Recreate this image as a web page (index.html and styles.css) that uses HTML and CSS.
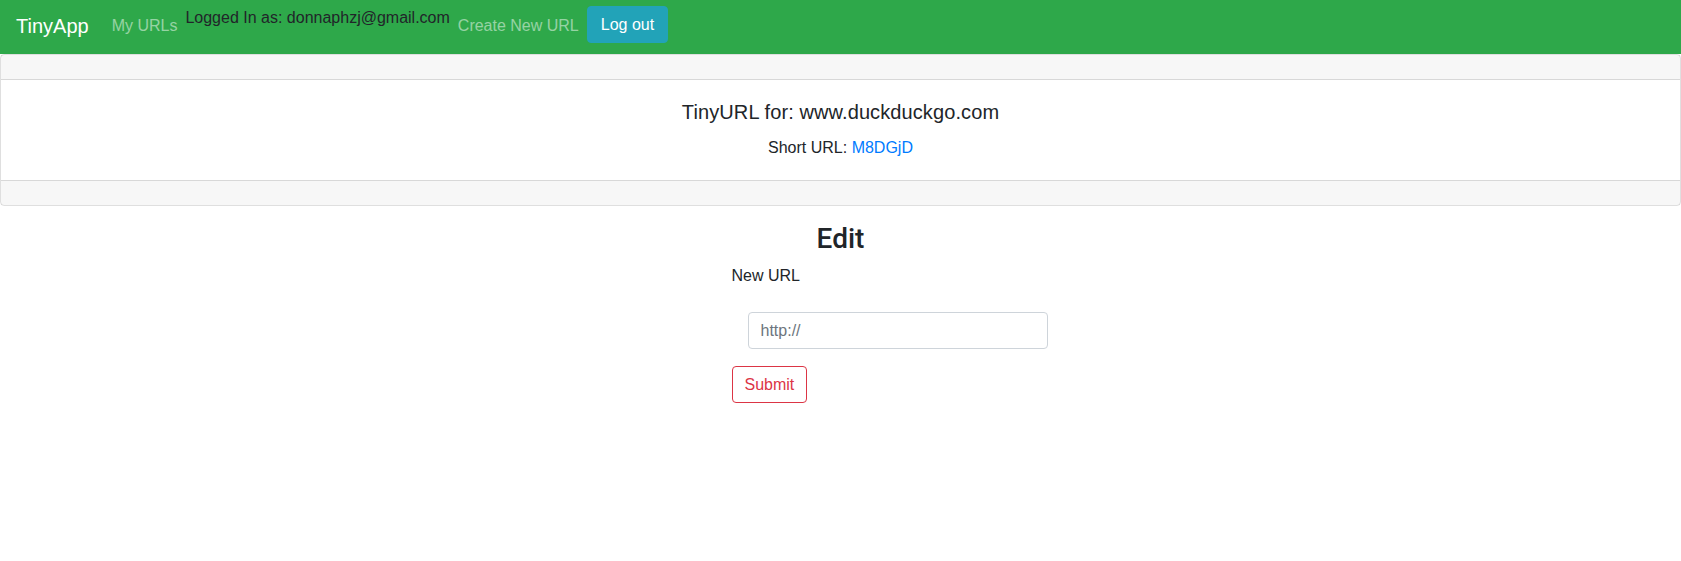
FILE: index.html
```html
<!DOCTYPE html>
<html lang="en">
<head>
<meta charset="utf-8">
<title>TinyApp</title>
<link rel="stylesheet" href="styles.css">
</head>
<body>
<nav class="navbar">
  <a class="brand" href="#">TinyApp</a>
  <a class="nav-link" href="#">My URLs</a>
  <div class="login">Logged In as: donnaphzj@gmail.com</div>
  <a class="nav-link" href="#">Create New URL</a>
  <button class="btn btn-info" type="button">Log out</button>
</nav>
<div class="card">
  <div class="card-header"></div>
  <div class="card-body">
    <h5 class="card-title">TinyURL for: www.duckduckgo.com</h5>
    <p class="card-text">Short URL: <a class="link" href="#">M8DGjD</a></p>
  </div>
  <div class="card-footer"></div>
</div>
<main class="edit">
  <h3 class="edit-title">Edit</h3>
  <form class="edit-form">
    <label class="form-label">New URL</label>
    <input class="form-control" type="text" placeholder="http://">
    <button class="btn btn-outline-danger" type="button">Submit</button>
  </form>
</main>
</body>
</html>
```
FILE: styles.css
```css
* { box-sizing: border-box; }
body {
  margin: 0;
  font-family: "Liberation Sans", Arial, sans-serif;
  font-size: 16px;
  line-height: 24px;
  color: #212529;
  background: #fff;
}
a { text-decoration: none; }
.navbar {
  display: flex;
  align-items: flex-start;
  background: #2ea84a;
  padding: 6px 16px 8px;
  height: 54px;
}
.brand {
  color: #fff;
  font-size: 20px;
  line-height: 30px;
  padding: 5px 0;
  margin-right: 15px;
}
.nav-link {
  color: rgba(255,255,255,.5);
  padding: 8px;
}
.login {
  color: #212529;
}
.btn {
  font-family: inherit;
  font-size: 16px;
  line-height: 24px;
  padding: 6px 12px;
  border: 1px solid transparent;
  border-radius: 4px;
  background: transparent;
  cursor: pointer;
}
.btn-info {
  background: #22a3b8;
  border-color: #22a3b8;
  color: #fff;
  height: 37px;
  padding: 5px 13px;
}
.card {
  border: 1px solid rgba(0,0,0,.125);
  border-radius: 4px;
  display: flex;
  flex-direction: column;
}
.card-header {
  height: 25px;
  background: rgba(0,0,0,.03);
  border-bottom: 1px solid rgba(0,0,0,.125);
}
.card-footer {
  height: 25px;
  background: rgba(0,0,0,.03);
  border-top: 1px solid rgba(0,0,0,.125);
}
.card-body {
  padding: 20px;
  text-align: center;
}
.card-title {
  margin: 0 0 12px;
  font-size: 20px;
  line-height: 24px;
  font-weight: 400;
  letter-spacing: 0.1px;
}
.card-text { margin: 0; }
.link { color: #007bff; }
.edit {
  display: flex;
  flex-direction: column;
}
.edit-title {
  margin: 16px 0 8px;
  text-align: center;
  font-family: Roboto, "Liberation Sans", sans-serif;
  font-size: 28px;
  line-height: 34px;
  font-weight: 500;
}
.edit-form {
  display: flex;
  flex-direction: column;
  align-items: flex-start;
  margin-left: calc(50% - 109px);
}
.form-label {
  margin-bottom: 24px;
}
.form-control {
  width: 300px;
  height: 37px;
  margin-left: 16px;
  margin-bottom: 17px;
  padding: 6px 12px;
  font-family: inherit;
  font-size: 16px;
  color: #495057;
  border: 1px solid #ced4da;
  border-radius: 4px;
}
.form-control::placeholder { color: #6c757d; }
.btn-outline-danger {
  color: #dc3545;
  border-color: #dc3545;
  height: 37px;
  padding: 5px 12px;
}
```
